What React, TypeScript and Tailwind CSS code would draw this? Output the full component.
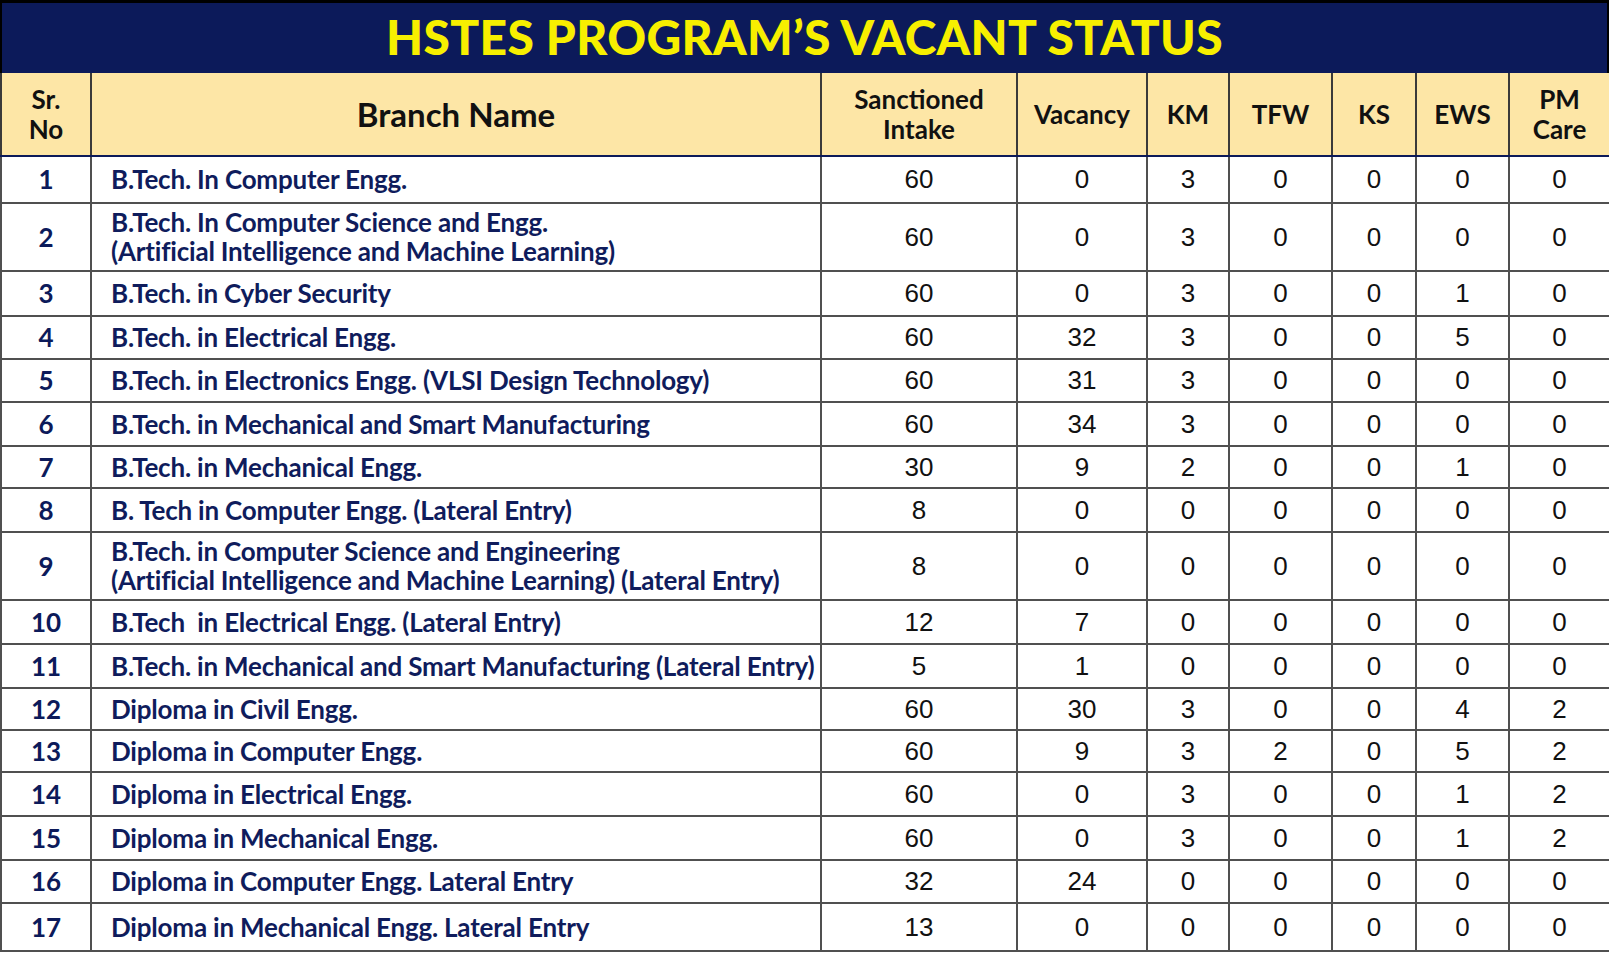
const rows: { sr: number; name: string[]; vals: number[]; h: string }[] = [
  { sr: 1, name: ['B.Tech. In Computer Engg.'], vals: [60, 0, 3, 0, 0, 0, 0], h: 'h-[47px]' },
  { sr: 2, name: ['B.Tech. In Computer Science and Engg.', '(Artificial Intelligence and Machine Learning)'], vals: [60, 0, 3, 0, 0, 0, 0], h: 'h-[68px]' },
  { sr: 3, name: ['B.Tech. in Cyber Security'], vals: [60, 0, 3, 0, 0, 1, 0], h: 'h-[45px]' },
  { sr: 4, name: ['B.Tech. in Electrical Engg.'], vals: [60, 32, 3, 0, 0, 5, 0], h: 'h-[43px]' },
  { sr: 5, name: ['B.Tech. in Electronics Engg. (VLSI Design Technology)'], vals: [60, 31, 3, 0, 0, 0, 0], h: 'h-[43px]' },
  { sr: 6, name: ['B.Tech. in Mechanical and Smart Manufacturing'], vals: [60, 34, 3, 0, 0, 0, 0], h: 'h-[44px]' },
  { sr: 7, name: ['B.Tech. in Mechanical Engg.'], vals: [30, 9, 2, 0, 0, 1, 0], h: 'h-[42px]' },
  { sr: 8, name: ['B. Tech in Computer Engg. (Lateral Entry)'], vals: [8, 0, 0, 0, 0, 0, 0], h: 'h-[44px]' },
  { sr: 9, name: ['B.Tech. in Computer Science and Engineering', '(Artificial Intelligence and Machine Learning) (Lateral Entry)'], vals: [8, 0, 0, 0, 0, 0, 0], h: 'h-[68px]' },
  { sr: 10, name: ['B.Tech\u00a0 in Electrical Engg. (Lateral Entry)'], vals: [12, 7, 0, 0, 0, 0, 0], h: 'h-[44px]' },
  { sr: 11, name: ['B.Tech. in Mechanical and Smart Manufacturing (Lateral Entry)'], vals: [5, 1, 0, 0, 0, 0, 0], h: 'h-[44px]' },
  { sr: 12, name: ['Diploma in Civil Engg.'], vals: [60, 30, 3, 0, 0, 4, 2], h: 'h-[42px]' },
  { sr: 13, name: ['Diploma in Computer Engg.'], vals: [60, 9, 3, 2, 0, 5, 2], h: 'h-[42px]' },
  { sr: 14, name: ['Diploma in Electrical Engg.'], vals: [60, 0, 3, 0, 0, 1, 2], h: 'h-[44px]' },
  { sr: 15, name: ['Diploma in Mechanical Engg.'], vals: [60, 0, 3, 0, 0, 1, 2], h: 'h-[44px]' },
  { sr: 16, name: ['Diploma in Computer Engg. Lateral Entry'], vals: [32, 24, 0, 0, 0, 0, 0], h: 'h-[43px]' },
  { sr: 17, name: ['Diploma in Mechanical Engg. Lateral Entry'], vals: [13, 0, 0, 0, 0, 0, 0], h: 'h-[48px]' },
];

const cell = 'border-2 border-[#505050]';
const head = 'border-2 border-[#3a3a3a] border-b-[#0c1a5a] border-t-0 font-bold text-[26px] leading-[30px] text-[#111]';

export default function App() {
  return (
    <div className="w-[1609px] h-[978px] bg-white font-['Lato',sans-serif]">
      <div className="h-[73px] bg-[#0c1a5a] border-t-[3px] border-x-2 border-black flex items-center justify-center">
        <h1 className="text-[48px] font-black text-[#f7ef00] tracking-[0.3px] leading-none -mt-[3px]">HSTES PROGRAM’S VACANT STATUS</h1>
      </div>
      <table className="w-[1609px] border-collapse table-fixed">
        <colgroup>
          <col className="w-[90px]" />
          <col className="w-[730px]" />
          <col className="w-[196px]" />
          <col className="w-[130px]" />
          <col className="w-[82px]" />
          <col className="w-[103px]" />
          <col className="w-[84px]" />
          <col className="w-[93px]" />
          <col className="w-[101px]" />
        </colgroup>
        <thead>
          <tr className="h-[83px] bg-[#fde6a6]">
            <th className={head}>Sr.<br />No</th>
            <th className={`${head} text-[33px]`}>Branch Name</th>
            <th className={`${head} text-[#0c1a5a]`}>Sanctioned<br />Intake</th>
            <th className={head}>Vacancy</th>
            <th className={head}>KM</th>
            <th className={head}>TFW</th>
            <th className={head}>KS</th>
            <th className={head}>EWS</th>
            <th className={head}>PM<br />Care</th>
          </tr>
        </thead>
        <tbody>
          {rows.map((r) => (
            <tr key={r.sr} className={r.h}>
              <td className={`${cell} text-center font-bold text-[26px] text-[#0c1a5a]`}>{r.sr}</td>
              <td className={`${cell} pl-[19px] font-bold text-[26px] leading-[29px] text-[#0f1c5c] whitespace-nowrap tracking-[-0.2px]`}>
                {r.name.map((n, i) => (
                  <div key={i}>{n}</div>
                ))}
              </td>
              {r.vals.map((v, i) => (
                <td key={i} className={`${cell} text-center font-['Liberation_Sans',sans-serif] text-[26px] text-[#111]`}>
                  {v}
                </td>
              ))}
            </tr>
          ))}
        </tbody>
      </table>
    </div>
  );
}
